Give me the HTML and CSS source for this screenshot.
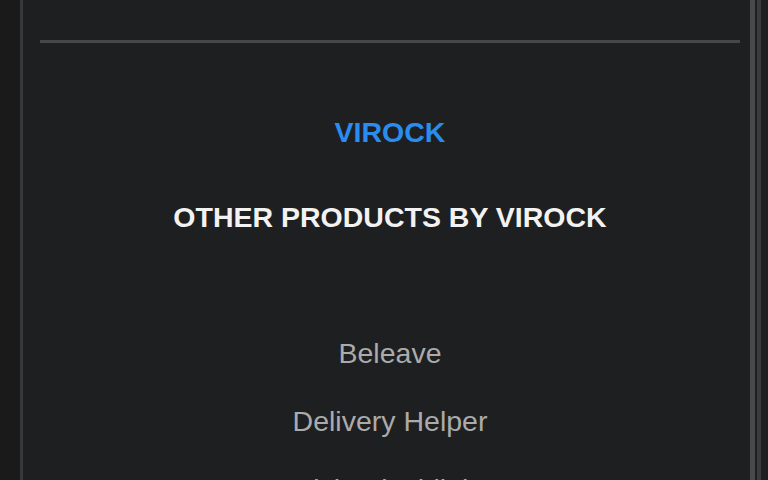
FILE: index.html
```html
<!DOCTYPE html>
<html lang="en">
<head>
<meta charset="utf-8">
<title>Virock</title>
<link rel="stylesheet" href="styles.css">
</head>
<body>
<div class="frame">
  <div class="gutter"></div>
  <main class="panel">
    <div class="top-space"></div>
    <hr class="rule">
    <section class="content">
      <h2 class="brand">VIROCK</h2>
      <h3 class="heading">OTHER PRODUCTS BY VIROCK</h3>
      <ul class="products">
        <li>Beleave</li>
        <li>Delivery Helper</li>
        <li>Pixie Flashlight</li>
      </ul>
    </section>
  </main>
  <div class="scroll">
    <div class="scroll-line"></div>
  </div>
</div>
</body>
</html>
```
FILE: styles.css
```css
html, body {
  margin: 0;
  padding: 0;
  height: 100%;
  overflow: hidden;
  background: #1b1b1c;
  font-family: "Liberation Sans", Arial, sans-serif;
}
.frame {
  display: flex;
  height: 480px;
  overflow: hidden;
}
.gutter {
  width: 20px;
  background: #1a1a1b;
  flex: none;
}
.panel {
  flex: 1;
  background: #1e1f21;
  border-left: 3px solid #373839;
  border-right: 5px solid #48494a;
  padding: 0 10px 0 17px;
  display: flex;
  flex-direction: column;
  overflow: hidden;
}
.panel > * {
  flex-shrink: 0;
}
.top-space {
  height: 40px;
}
.rule {
  margin: 0;
  border: none;
  height: 3px;
  background: #464748;
}
.content {
  display: flex;
  flex-direction: column;
  align-items: center;
  padding-top: 73px;
}
.brand, .heading {
  margin: 0;
  font-size: 28.5px;
  line-height: 33px;
  font-weight: bold;
}
.brand {
  color: #2b8cf0;
}
.heading {
  color: #f2f2f2;
  margin-top: 52px;
}
.products {
  list-style: none;
  margin: 103px 0 0;
  padding: 0;
  display: flex;
  flex-direction: column;
  align-items: center;
  gap: 35px;
}
.products li {
  font-size: 28.5px;
  line-height: 33px;
  color: #ababab;
}
.scroll {
  width: 11px;
  flex: none;
  background: #1f1f20;
  display: flex;
  padding-left: 2px;
}
.scroll-line {
  width: 4px;
  background: #3a3b3c;
}
```
